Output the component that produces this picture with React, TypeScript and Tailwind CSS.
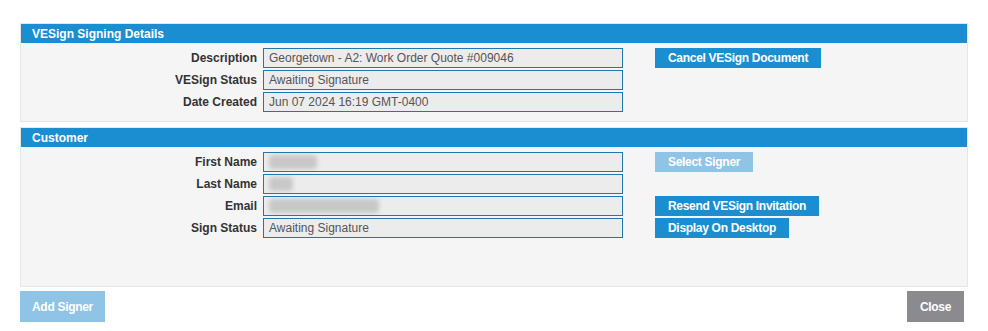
const font = "font-['Arial','Liberation_Sans',sans-serif]";

function Field({ label, value, blur }: { label: string; value: string; blur?: string }) {
  return (
    <div className="flex items-center h-[20px] mb-[2px]">
      <div className="w-[242px] pr-[6px] text-right text-[12px] font-bold text-[#333]">{label}</div>
      <div className="w-[360px] h-[20px] border border-[#2176b0] bg-[#ececec] px-[5px] flex items-center text-[12px] text-[#555] overflow-hidden">
        {blur ? <span className={`inline-block h-[14px] bg-[#c8c8c8] blur-[2px] rounded-sm ${blur}`}></span> : value}
      </div>
    </div>
  );
}

function Btn({ text, faded }: { text: string; faded?: boolean }) {
  return (
    <div
      className={`h-[20px] px-[13px] flex items-center text-[12px] tracking-[-0.3px] font-bold text-white w-fit ${
        faded ? 'bg-[#8fc4e6]' : 'bg-[#1a8ed1]'
      }`}
    >
      {text}
    </div>
  );
}

function Panel({ title, children, bodyClass }: { title: string; children: React.ReactNode; bodyClass: string }) {
  return (
    <div className="border border-[#e6e6e6] bg-[#f5f5f5]">
      <div className="h-[19px] bg-[#1a8ed1] px-[11px] flex items-center text-[12px] font-bold text-white">{title}</div>
      <div className={`flex items-start ${bodyClass}`}>{children}</div>
    </div>
  );
}

export default function App() {
  return (
    <div className={`w-[988px] h-[331px] bg-white pt-[23px] pl-[20px] pr-[20px] ${font}`}>
      <Panel title="VESign Signing Details" bodyClass="pt-[5px] pb-[7px]">
        <div>
          <Field label="Description" value="Georgetown - A2: Work Order Quote #009046" />
          <Field label="VESign Status" value="Awaiting Signature" />
          <Field label="Date Created" value="Jun 07 2024 16:19 GMT-0400" />
        </div>
        <div className="ml-[32px] flex flex-col">
          <Btn text="Cancel VESign Document" />
        </div>
      </Panel>

      <div className="h-[5px]"></div>

      <Panel title="Customer" bodyClass="pt-[5px] h-[139px]">
        <div>
          <Field label="First Name" value="" blur="w-[48px]" />
          <Field label="Last Name" value="" blur="w-[24px]" />
          <Field label="Email" value="" blur="w-[110px]" />
          <Field label="Sign Status" value="Awaiting Signature" />
        </div>
        <div className="ml-[32px] flex flex-col gap-[2px]">
          <Btn text="Select Signer" faded />
          <div className="h-[20px]"></div>
          <Btn text="Resend VESign Invitation" />
          <Btn text="Display On Desktop" />
        </div>
      </Panel>

      <div className="flex justify-between mt-[4px] pr-[4px]">
        <div className="h-[31px] w-[85px] bg-[#8fc4e6] flex items-center justify-center text-[12px] tracking-[-0.3px] font-bold text-white">
          Add Signer
        </div>
        <div className="h-[31px] w-[57px] bg-[#8b8b8f] flex items-center justify-center text-[12px] tracking-[-0.3px] font-bold text-white">
          Close
        </div>
      </div>
    </div>
  );
}
